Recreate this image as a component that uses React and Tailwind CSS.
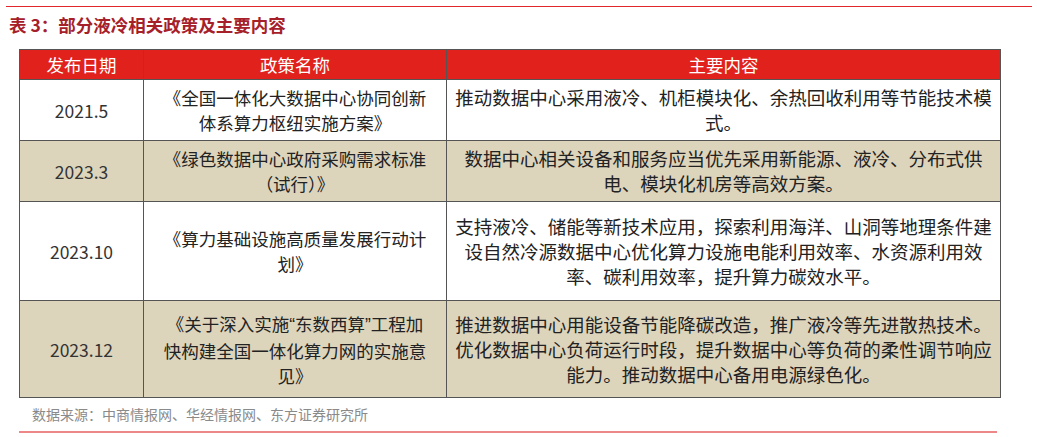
import React from "react";

const Q = ({ children }) => <span className="font-['Liberation_Sans',sans-serif]">{children}</span>;

const rows = [
  {
    date: "2021.5",
    name: ["《全国一体化大数据中心协同创新", "体系算力枢纽实施方案》"],
    content: ["推动数据中心采用液冷、机柜模块化、余热回收利用等节能技术模", "式。"],
    tan: false,
    h: "h-[61px]",
  },
  {
    date: "2023.3",
    name: ["《绿色数据中心政府采购需求标准", "（试行）》"],
    content: ["数据中心相关设备和服务应当优先采用新能源、液冷、分布式供", "电、模块化机房等高效方案。"],
    tan: true,
    h: "h-[61px]",
  },
  {
    date: "2023.10",
    name: ["《算力基础设施高质量发展行动计", "划》"],
    content: [
      "支持液冷、储能等新技术应用，探索利用海洋、山洞等地理条件建",
      "设自然冷源数据中心优化算力设施电能利用效率、水资源利用效",
      "率、碳利用效率，提升算力碳效水平。",
    ],
    tan: false,
    h: "h-[99px]",
  },
  {
    date: "2023.12",
    name: [
      <>
        《关于深入实施<Q>“</Q>东数西算<Q>”</Q>工程加
      </>,
      "快构建全国一体化算力网的实施意",
      "见》",
    ],
    content: [
      "推进数据中心用能设备节能降碳改造，推广液冷等先进散热技术。",
      "优化数据中心负荷运行时段，提升数据中心等负荷的柔性调节响应",
      "能力。推动数据中心备用电源绿色化。",
    ],
    tan: true,
    h: "h-[97px]",
  },
];

const Lines = ({ lines }) => lines.map((l, i) => <div key={i}>{l}</div>);

const App = () => {
  return (
    <div className="w-[1037px] h-[437px] bg-white font-['Noto_Sans_CJK_SC',sans-serif] text-[#222]">
      <div className="pt-[6px] pl-[6px]">
        <div className="w-[1026px] h-px bg-[#e3262b]" />
      </div>
      <div className="mt-[6px] pl-[9px] h-[24px] leading-[24px] text-[17.5px] font-bold text-[#a6202a]">
        表 3：部分液冷相关政策及主要内容
      </div>
      <div className="mt-[12px] pl-[19px]">
        <table className="table-fixed border-collapse w-[981px] text-[17.5px] leading-[25px]">
          <colgroup>
            <col className="w-[124px]" />
            <col className="w-[303px]" />
            <col className="w-[554px]" />
          </colgroup>
          <thead>
            <tr className="h-[30px] bg-[#e1211b] text-white">
              <th className="border border-[#555] font-normal">发布日期</th>
              <th className="border border-[#555] font-normal">政策名称</th>
              <th className="border border-[#555] font-normal">主要内容</th>
            </tr>
          </thead>
          <tbody>
            {rows.map((r) => (
              <tr key={r.date} className={`${r.h} ${r.tan ? "bg-[#ddd4bc]" : "bg-white"}`}>
                <td className="border border-[#555] text-center text-[#333]">{r.date}</td>
                <td className="border border-[#555] text-center">
                  <Lines lines={r.name} />
                </td>
                <td className="border border-[#555] text-center text-[18.5px]">
                  <Lines lines={r.content} />
                </td>
              </tr>
            ))}
          </tbody>
        </table>
      </div>
      <div className="mt-[6px] pl-[32px] h-[20px] leading-[20px] text-[14px] text-[#8a8a8a]">
        数据来源：中商情报网、华经情报网、东方证券研究所
      </div>
      <div className="mt-[7px] pl-[19px]">
        <div className="w-[978px] h-[2px] bg-[#ee8888]" />
      </div>
    </div>
  );
};

export default App;
